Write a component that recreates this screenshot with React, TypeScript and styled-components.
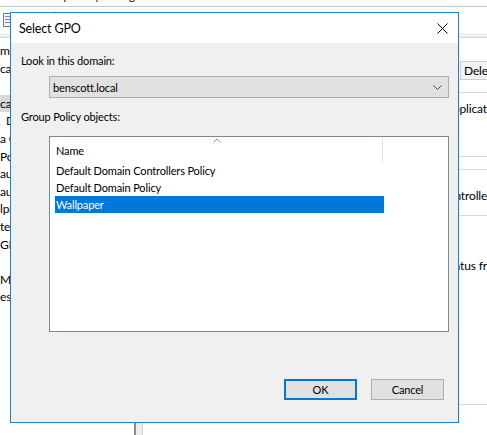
import React from 'react';
import styled, { createGlobalStyle } from 'styled-components';

const GlobalStyle = createGlobalStyle`
  html, body {
    margin: 0;
    padding: 0;
    background: #ffffff;
  }
  body {
    font-family: Lato, "Noto Sans", sans-serif;
    font-size: 11px;
    letter-spacing: -0.15px;
    color: #000;
  }
  * { box-sizing: border-box; }
`;

const treeRows = [
  { text: 'mains', indent: 0 },
  { text: 'cal', indent: 0 },
  { text: '', indent: 0 },
  { text: 'cal', indent: 0, selected: true },
  { text: 'Default Domain Policy', indent: 6 },
  { text: 'a Controllers', indent: 0 },
  { text: 'Policy', indent: 0 },
  { text: 'audit', indent: 0 },
  { text: 'audit', indent: 0 },
  { text: 'lpaper', indent: 0 },
  { text: 'ters', indent: 0 },
  { text: 'GPOs', indent: 0 },
  { text: '', indent: 0 },
  { text: 'Modeling', indent: 0 },
  { text: 'esults', indent: 0 },
];

const gpos = [
  'Default Domain Controllers Policy',
  'Default Domain Policy',
  'Wallpaper',
];

export default function App() {
  return (
    <>
      <GlobalStyle />
      <Screen>
        <TopStrip>
          <Crumb>Group Policy Management</Crumb>
        </TopStrip>
        <Toolbar>
          <ToolIcon viewBox="0 0 12 14">
            <rect x="0.5" y="0.5" width="11" height="13" fill="#f4f4f4" stroke="#7a7a7a" />
            <rect x="2" y="3" width="8" height="1" fill="#6d8fb5" />
            <rect x="2" y="6" width="8" height="1" fill="#6d8fb5" />
            <rect x="2" y="9" width="8" height="1" fill="#6d8fb5" />
          </ToolIcon>
          <ToolIcon viewBox="0 0 12 14">
            <rect x="0.5" y="0.5" width="11" height="13" fill="#e6e6e6" stroke="#9a9a9a" />
          </ToolIcon>
          <ToolSep />
          <ToolIcon viewBox="0 0 12 14">
            <rect x="0" y="0" width="12" height="3" fill="#2c6fc1" />
          </ToolIcon>
        </Toolbar>
        <Workspace>
          <TreePane>
            {treeRows.map((r, i) => (
              <TreeRow key={i} $selected={r.selected} $indent={r.indent}>
                {r.text}
              </TreeRow>
            ))}
          </TreePane>
          <Splitter />
          <DetailPane>
            <DetailButtonRow>
              <DetailButton>Delete</DetailButton>
            </DetailButtonRow>
            <DetailSection $height={64}>
              <DetailText $indent={302}>Applications</DetailText>
            </DetailSection>
            <DetailSection $height={13} />
            <DetailSection $height={46}>
              <DetailText $top={18} $indent={297}>Controllers</DetailText>
            </DetailSection>
            <DetailSection $height={189}>
              <DetailText $top={42} $indent={301}>Status from</DetailText>
            </DetailSection>
          </DetailPane>
        </Workspace>

        <Dialog>
          <TitleBar>
            <Title>Select GPO</Title>
            <CloseIcon viewBox="0 0 11 11">
              <path d="M0.5 0.5 L10.5 10.5 M10.5 0.5 L0.5 10.5" stroke="#000" strokeWidth="1" />
            </CloseIcon>
          </TitleBar>
          <Body>
            <Label>Look in this domain:</Label>
            <Combo>
              <span>benscott.local</span>
              <ChevronIcon viewBox="0 0 9 5">
                <path d="M0.5 0.5 L4.5 4.5 L8.5 0.5" fill="none" stroke="#444" strokeWidth="1" />
              </ChevronIcon>
            </Combo>
            <Label $gap={11}>Group Policy objects:</Label>
            <ListBox>
              <ListHeader>
                <HeaderCell>
                  <SortArrow viewBox="0 0 8 5">
                    <path d="M0.5 4.5 L4 1 L7.5 4.5" fill="none" stroke="#9a9a9a" strokeWidth="1" />
                  </SortArrow>
                  Name
                </HeaderCell>
              </ListHeader>
              <Rows>
                {gpos.map((g) => (
                  <Row key={g} $selected={g === 'Wallpaper'}>
                    {g}
                  </Row>
                ))}
              </Rows>
            </ListBox>
            <Buttons>
              <Button $primary>OK</Button>
              <Button>Cancel</Button>
            </Buttons>
          </Body>
        </Dialog>
      </Screen>
    </>
  );
}

const Screen = styled.div`
  position: relative;
  width: 487px;
  height: 435px;
  overflow: hidden;
  background: #ffffff;
  display: flex;
  flex-direction: column;
`;

const TopStrip = styled.div`
  height: 7px;
  border-bottom: 1px solid #c9c9c9;
  overflow: hidden;
`;

const Crumb = styled.div`
  margin-top: -12px;
  padding-left: 40px;
  line-height: 16px;
`;

const Toolbar = styled.div`
  height: 26px;
  display: flex;
  align-items: center;
  gap: 14px;
  padding-left: 3px;
`;

const ToolIcon = styled.svg`
  width: 12px;
  height: 14px;
  flex: none;
`;

const ToolSep = styled.div`
  width: 1px;
  height: 18px;
  background: #cfcfcf;
`;

const Workspace = styled.div`
  flex: 1;
  display: flex;
  border-top: 4px solid #f0f0f0;
  box-shadow: inset 0 1px 0 #d6d6d6;
`;

const TreePane = styled.div`
  flex: none;
  width: 134px;
  padding-top: 5px;
  display: flex;
  flex-direction: column;
  overflow: hidden;
`;

const TreeRow = styled.div<{ $selected?: boolean; $indent: number }>`
  height: 17.6px;
  line-height: 17.6px;
  padding-left: ${(p) => p.$indent}px;
  white-space: nowrap;
  background: ${(p) => (p.$selected ? '#d9d9d9' : 'transparent')};
  font-size: 12px;
`;

const Splitter = styled.div`
  flex: none;
  width: 9px;
  border-left: 2px solid #8a8a8a;
  border-right: 1px solid #d0d0d0;
  background: #ececec;
`;

const DetailPane = styled.div`
  flex: 1;
  min-width: 0;
  overflow: hidden;
  display: flex;
  flex-direction: column;
`;

const DetailButtonRow = styled.div`
  height: 56px;
  padding-top: 24px;
  padding-left: 317px;
  border-bottom: 1px solid #dcdcdc;
`;

const DetailButton = styled.div`
  width: 80px;
  height: 19px;
  line-height: 17px;
  padding-left: 3px;
  border: 1px solid #cdcdcd;
  background: #f3f3f3;
  font-size: 12px;
`;

const DetailSection = styled.div<{ $height: number }>`
  flex: none;
  height: ${(p) => p.$height}px;
  border-bottom: 1px solid #dcdcdc;
`;

const DetailText = styled.div<{ $top?: number; $indent: number }>`
  margin-top: ${(p) => p.$top ?? 8}px;
  padding-left: ${(p) => p.$indent}px;
  font-size: 12px;
  white-space: nowrap;
`;

const Dialog = styled.div`
  position: absolute;
  left: 10px;
  top: 12px;
  width: 449px;
  height: 411px;
  border: 1px solid #1883d7;
  background: #f0f0f0;
  display: flex;
  flex-direction: column;
`;

const TitleBar = styled.div`
  height: 30px;
  background: #ffffff;
  display: flex;
  align-items: center;
  justify-content: space-between;
  padding: 0 10px 0 8px;
`;

const Title = styled.div`
  font-size: 12.5px;
`;

const CloseIcon = styled.svg`
  width: 11px;
  height: 11px;
`;

const Body = styled.div`
  flex: 1;
  display: flex;
  flex-direction: column;
  padding: 10px 9px 22px 10px;
`;

const Label = styled.div<{ $gap?: number }>`
  margin-top: ${(p) => p.$gap ?? 0}px;
  line-height: 16px;
`;

const Combo = styled.div`
  margin: 7px 0 0 28px;
  height: 22px;
  border: 1px solid #adadad;
  background: #e1e1e1;
  display: flex;
  align-items: center;
  justify-content: space-between;
  padding: 0 6px 0 3px;
`;

const ChevronIcon = styled.svg`
  width: 9px;
  height: 5px;
`;

const ListBox = styled.div`
  margin: 11px 0 0 28px;
  height: 196px;
  border: 1px solid #828790;
  background: #ffffff;
  display: flex;
  flex-direction: column;
`;

const ListHeader = styled.div`
  height: 25px;
  padding-top: 1px;
  display: flex;
`;

const HeaderCell = styled.div`
  position: relative;
  width: 333px;
  height: 24px;
  border-right: 1px solid #e5e5e5;
  padding: 5px 0 0 6px;
  line-height: 16px;
`;

const SortArrow = styled.svg`
  position: absolute;
  left: 163px;
  top: 0;
  width: 8px;
  height: 5px;
`;

const Rows = styled.div`
  display: flex;
  flex-direction: column;
  padding-left: 5px;
`;

const Row = styled.div<{ $selected?: boolean }>`
  width: 329px;
  height: 17px;
  line-height: 17px;
  padding-left: 1px;
  background: ${(p) => (p.$selected ? '#0078d7' : 'transparent')};
  color: ${(p) => (p.$selected ? '#ffffff' : '#000000')};
`;

const Buttons = styled.div`
  margin-top: auto;
  display: flex;
  justify-content: flex-end;
  gap: 14px;
  padding-right: 5px;
`;

const Button = styled.div<{ $primary?: boolean }>`
  width: 73px;
  height: 21px;
  display: flex;
  align-items: center;
  justify-content: center;
  background: #e1e1e1;
  border: ${(p) => (p.$primary ? '2px solid #0078d7' : '1px solid #adadad')};
`;
